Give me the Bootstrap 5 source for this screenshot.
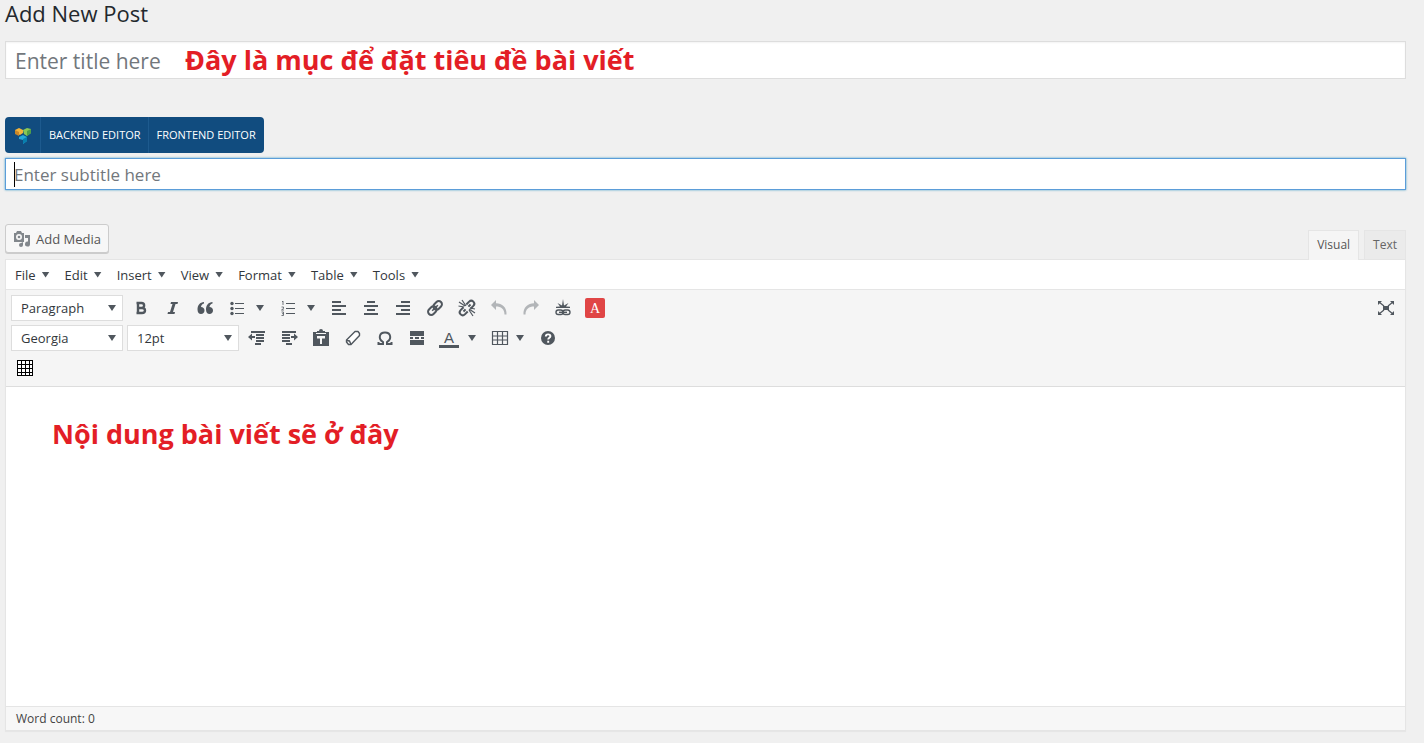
<!DOCTYPE html>
<html lang="vi">
<head>
<meta charset="utf-8">
<meta name="viewport" content="width=device-width, initial-scale=1">
<title>Add New Post</title>
<link href="https://cdn.jsdelivr.net/npm/bootstrap@5.3.0/dist/css/bootstrap.min.css" rel="stylesheet">
<style>
body { background: #f0f0f0; color: #32373c; font: 13px/20px "Open Sans", "Noto Sans", sans-serif; }
.page { padding: 0 18px 12px 5px; }
.page-title { font-size: 22px; line-height: 26px; color: #23282d; margin: 0 0 15px; font-weight: 400; }
.field { border: 1px solid #ddd; border-radius: 0; background: #fff; color: #32373c; line-height: 24px; box-shadow: inset 0 1px 2px rgba(0,0,0,.05); }
.field::placeholder { color: #72777c; opacity: 1; }
.field-title { height: 38px; font-size: 21px; padding: 5px 9px 3px; }
.field-subtitle { height: 32px; font-size: 17px; padding: 4px 8px 3px; border-color: #5b9dd9; box-shadow: 0 0 2px rgba(30,140,190,.8); }
.field-subtitle:focus { border-color: #5b9dd9; box-shadow: 0 0 2px rgba(30,140,190,.8); }
.text-caret { left: 9px; top: 4px; width: 1px; height: 25px; background: #000; }
.note { color: #e31e26; font: 700 27px/32px "Open Sans", "Noto Sans", sans-serif; white-space: nowrap; }
.note-title { left: 180px; top: 3px; pointer-events: none; }
.builder { margin: 38px 0 5px; height: 36px; }
.builder .btn { background: #114c7f; color: #fff; font-size: 11px; line-height: 20px; padding: 0 8px; border: 0; border-left: 1px solid #1d5a8e; border-radius: 4px; }
.builder .btn:first-child { border-left: 0; width: 36px; padding: 0; }
.media-row { margin-top: 34px; }
.btn-media { height: 29px; background: #f7f7f7; border: 1px solid #ccc; border-radius: 3px; color: #555; font-size: 13px; line-height: 20px; padding: 0 7px; box-shadow: 0 1px 0 #ccc; }
.mode-tabs { gap: 5px; padding-top: 6px; }
.mode-tabs .nav-link { height: 29px; padding: 4px 8px; font-size: 12px; color: #666; background: #ebebeb; border: 1px solid #e5e5e5; border-bottom: 0; border-radius: 0; }
.mode-tabs .nav-link.active { background: #f5f5f5; color: #555; height: 30px; margin-bottom: -1px; position: relative; }
.editor { border: 1px solid #e5e5e5; background: #fff; box-shadow: 0 1px 1px rgba(0,0,0,.04); }
.menus { height: 30px; border-bottom: 1px solid #e5e5e5; padding-left: 1px; }
.menus .btn { font-size: 13px; line-height: 20px; padding: 0 7px 0 8px; color: #32373c; border: 0; gap: 6px; border-radius: 0; }
.caret { width: 8px; height: 6px; background: #50575e; clip-path: polygon(0 0, 100% 0, 50% 100%); flex: none; }
.tools { background: #f5f5f5; border-bottom: 1px solid #ddd; padding: 3px 5px; }
.tool-row { gap: 4px; height: 30px; }
.tool-select { width: 112px; height: 26px; font-size: 13px; line-height: 18px; padding: 0 24px 0 9px; border: 1px solid #ddd; border-radius: 0; color: #32373c; background: #fff url("data:image/svg+xml,%3Csvg xmlns='http://www.w3.org/2000/svg' viewBox='0 0 8 6'%3E%3Cpath fill='%2350575e' d='M0 0h8L4 6z'/%3E%3C/svg%3E") no-repeat right 6px center / 8px 6px; }
.tool { width: 28px; height: 26px; padding: 0 4px; border: 0; color: #50575e; gap: 9px; border-radius: 0; }
.tool svg { flex: none; }
.tool-split { width: 47px; }
.tool-table { width: 44px; gap: 6px; }
.faded { opacity: .4; }
.canvas { padding: 31px 46px; }
.status { height: 24px; border-top: 1px solid #e5e5e5; background: #f7f7f7; font-size: 12px; line-height: 24px; padding: 0 10px; color: #444; }
</style>
</head>
<body>
<main class="page min-vh-100 d-flex flex-column">
  <h1 class="page-title">Add New Post</h1>
  <div class="position-relative">
    <input class="field field-title form-control" type="text" placeholder="Enter title here" aria-label="Title">
    <div class="note note-title position-absolute">Đây là mục để đặt tiêu đề bài viết</div>
  </div>
  <div class="builder d-flex">
    <div class="btn-group">
      <button class="btn" type="button" aria-label="Visual composer">
        <svg width="18" height="18" viewBox="0 0 18 18"><path fill="#f3b33b" d="M1 3l4-2 4 2v3L6 8 1 6z"/><path fill="#c78629" d="M1 3l4 2v4L1 7z"/><path fill="#8bc755" d="M9 3l4-2 4 1v4l-4 3-3-2z"/><path fill="#4f9d48" d="M13 4l4-2v4l-4 3z"/><path fill="#27a9d8" d="M5 10l4-2 4 2v4l-4 3v-4l-4-1z"/><path fill="#087fae" d="M9 12l4-2v4l-4 3z"/></svg>
      </button>
      <button class="btn" type="button">BACKEND EDITOR</button>
      <button class="btn" type="button">FRONTEND EDITOR</button>
    </div>
  </div>
  <div class="position-relative">
    <input class="field field-subtitle form-control" type="text" placeholder="Enter subtitle here" aria-label="Subtitle">
    <span class="text-caret position-absolute"></span>
  </div>
  <div class="media-row d-flex justify-content-between">
    <button class="btn btn-media d-flex align-items-center gap-1" type="button">
      <svg width="19" height="18" viewBox="0 0 19 18" fill="#82878c"><path fill-rule="evenodd" d="M1 3h2l1-2h4l1 2h2v9H1zM6 4a3 3 0 1 0 0 6 3 3 0 0 0 0-6z"/><circle cx="6" cy="7" r="1.300"/><path d="M12 5h5v9a2.500 2.500 0 1 1-2-2.400V8h-3z"/><path d="M10 12v3a2 2 0 1 1-2-2z"/></svg>
      Add Media
    </button>
    <nav class="mode-tabs nav" aria-label="Editor mode">
      <a class="nav-link active" href="#">Visual</a>
      <a class="nav-link" href="#">Text</a>
    </nav>
  </div>
  <section class="editor flex-grow-1 d-flex flex-column">
    <div class="menus d-flex align-items-center">
      <button class="btn d-flex align-items-center" type="button">File<span class="caret"></span></button>
      <button class="btn d-flex align-items-center" type="button">Edit<span class="caret"></span></button>
      <button class="btn d-flex align-items-center" type="button">Insert<span class="caret"></span></button>
      <button class="btn d-flex align-items-center" type="button">View<span class="caret"></span></button>
      <button class="btn d-flex align-items-center" type="button">Format<span class="caret"></span></button>
      <button class="btn d-flex align-items-center" type="button">Table<span class="caret"></span></button>
      <button class="btn d-flex align-items-center" type="button">Tools<span class="caret"></span></button>
    </div>
    <div class="tools">
      <div class="tool-row d-flex align-items-center">
        <select class="tool-select form-select" aria-label="Block format"><option>Paragraph</option></select>
        <button class="tool btn d-flex align-items-center" type="button" aria-label="Bold"><svg width="20" height="20" viewBox="0 0 20 20"><path fill="none" stroke="currentColor" stroke-width="2.400" d="M7 5v10h4c4 0 4-5 0-5H7h3.500c3.500 0 3.500-5 0-5zM5.500 5H8M5.500 15H8"/></svg></button>
        <button class="tool btn d-flex align-items-center" type="button" aria-label="Italic"><svg width="20" height="20" viewBox="0 0 20 20"><path fill="currentColor" d="M8 4h7l-.5 2h-2L10 14h2l-.5 2h-7l.5-2h2l2.500-8h-2z"/></svg></button>
        <button class="tool btn d-flex align-items-center" type="button" aria-label="Quote"><svg width="20" height="20" viewBox="0 0 20 20"><path fill="currentColor" d="M9 4v1.500C7 6 6 7.500 6 9c2 0 3.500 1.300 3.500 3.500S8 16 6 16s-3.500-1.500-3.500-4.500C2.500 7 5 4.300 9 4zM17.500 4v1.500c-2 .5-3 2-3 3.500 2 0 3.500 1.300 3.500 3.500S16.500 16 14.500 16 11 14.500 11 11.500C11 7 13.500 4.300 17.500 4z"/></svg></button>
        <button class="tool tool-split btn d-flex align-items-center" type="button" aria-label="Bulleted list"><svg width="20" height="20" viewBox="0 0 20 20"><path stroke="currentColor" stroke-width="1.200" d="M8 5.500h9M8 10.500h9M8 15.500h9"/><g fill="currentColor"><circle cx="5" cy="5.500" r="1.700"/><circle cx="5" cy="10.500" r="1.700"/><circle cx="5" cy="15.500" r="1.700"/></g></svg><span class="caret"></span></button>
        <button class="tool tool-split btn d-flex align-items-center" type="button" aria-label="Numbered list"><svg width="20" height="20" viewBox="0 0 20 20"><path stroke="currentColor" stroke-width="1.200" d="M8 5.500h9M8 10.500h9M8 15.500h9"/><path fill="none" stroke="currentColor" stroke-width=".8" d="M4 4l1-1v4M3.500 9h2v1.500l-2 1.500h2.500M3.500 14h2v3.500h-2M4 15.700h1.500"/></svg><span class="caret"></span></button>
        <button class="tool btn d-flex align-items-center" type="button" aria-label="Align left"><svg width="20" height="20" viewBox="0 0 20 20"><path stroke="currentColor" stroke-width="2" d="M3 4h9M3 8h14M3 12h9M3 16h14"/></svg></button>
        <button class="tool btn d-flex align-items-center" type="button" aria-label="Align center"><svg width="20" height="20" viewBox="0 0 20 20"><path stroke="currentColor" stroke-width="2" d="M6 4h8M3 8h14M6 12h8M3 16h14"/></svg></button>
        <button class="tool btn d-flex align-items-center" type="button" aria-label="Align right"><svg width="20" height="20" viewBox="0 0 20 20"><path stroke="currentColor" stroke-width="2" d="M8 4h9M3 8h14M8 12h9M3 16h14"/></svg></button>
        <button class="tool btn d-flex align-items-center" type="button" aria-label="Insert link"><svg width="20" height="20" viewBox="0 0 20 20"><g fill="none" stroke="currentColor" stroke-width="2" transform="rotate(-45 10 10)"><rect x="1.500" y="6.800" width="9.500" height="6.400" rx="3.200"/><rect x="9" y="6.800" width="9.500" height="6.400" rx="3.200"/><path d="M6 10h8" stroke-width="1.500"/></g></svg></button>
        <button class="tool btn d-flex align-items-center" type="button" aria-label="Remove link"><svg width="20" height="20" viewBox="0 0 20 20"><g fill="none" stroke="currentColor" stroke-width="2" transform="rotate(-45 10 10)"><path d="M8 7H4a3 3 0 0 0 0 6h4M12 7h4a3 3 0 0 1 0 6h-4"/><path d="M5 10h3M12 10h3"/></g><path stroke="currentColor" stroke-width="1.200" d="M2 4l6 4M5 2l4 6M1.500 8L7 9M12 12l4 6M12 11l6 4M13 10l5 1"/></svg></button>
        <button class="tool btn d-flex align-items-center faded" type="button" aria-label="Undo"><svg width="20" height="20" viewBox="0 0 20 20"><path fill="currentColor" d="M7 2v3.200c6 0 11 4 10.500 11.300h-2C15.500 11 12 8.500 7 8.500V12L2 7z"/></svg></button>
        <button class="tool btn d-flex align-items-center faded" type="button" aria-label="Redo"><svg width="20" height="20" viewBox="0 0 20 20"><path fill="currentColor" d="M13 2v3.200C7 5.200 2 9.200 2.500 16.500h2C4.500 11 8 8.500 13 8.500V12l5-5z"/></svg></button>
        <button class="tool btn d-flex align-items-center" type="button" aria-label="Page links"><svg width="20" height="20" viewBox="0 0 20 20"><path fill="currentColor" d="M10 1l1 6.500L15.500 5 13 8.500l4 .3V10H3V8.800l4-.3L4.500 5 9 7.500z"/><g fill="none" stroke="currentColor" stroke-width="1.400"><rect x="3" y="12" width="7" height="4.500" rx="2.200"/><rect x="10" y="12" width="7" height="4.500" rx="2.200"/><path d="M6 14.300h8"/></g></svg></button>
        <button class="tool btn d-flex align-items-center" type="button" aria-label="Font style"><svg width="20" height="20" viewBox="0 0 20 20"><rect width="20" height="20" rx="2" fill="#e04545"/><text x="10" y="15" text-anchor="middle" font-family="Liberation Serif, serif" font-size="14" fill="#fff">A</text></svg></button>
        <button class="tool btn d-flex align-items-center ms-auto" type="button" aria-label="Full screen"><svg width="20" height="20" viewBox="0 0 20 20"><path fill="currentColor" d="M7 8h6v4H7zM2 3h4L2 7zM18 3h-4l4 4zM2 17h4l-4-4zM18 17h-4l4-4z"/><path stroke="currentColor" stroke-width="1.300" d="M3 4l5 4M17 4l-5 4M3 16l5-4M17 16l-5-4"/></svg></button>
      </div>
      <div class="tool-row d-flex align-items-center">
        <select class="tool-select form-select" aria-label="Font family"><option>Georgia</option></select>
        <select class="tool-select form-select" aria-label="Font size"><option>12pt</option></select>
        <button class="tool btn d-flex align-items-center" type="button" aria-label="Decrease indent"><svg width="20" height="20" viewBox="0 0 20 20"><path stroke="currentColor" stroke-width="2" d="M4 4h14M9 7h8M9 10h8M9 13h8M8 16h6"/><path fill="currentColor" d="M1 9l4-3.500V8h3v2H5v2.500z"/></svg></button>
        <button class="tool btn d-flex align-items-center" type="button" aria-label="Increase indent"><svg width="20" height="20" viewBox="0 0 20 20"><path stroke="currentColor" stroke-width="2" d="M3 4h14M3 7h8M3 10h8M3 13h8M7 16h6"/><path fill="currentColor" d="M19 9l-4-3.500V8h-3v2h3v2.500z"/></svg></button>
        <button class="tool btn d-flex align-items-center" type="button" aria-label="Paste as text"><svg width="20" height="20" viewBox="0 0 20 20"><path fill="currentColor" fill-rule="evenodd" d="M2 4h4V3h2a2 2 0 0 1 4 0h2v1h4v14H2zM5 5v1h10V5zM6 8v2.500h3V16h2v-5.500h3V8z"/></svg></button>
        <button class="tool btn d-flex align-items-center" type="button" aria-label="Clear formatting"><svg width="20" height="20" viewBox="0 0 20 20"><path fill="#fff" stroke="currentColor" stroke-width="1.400" stroke-linejoin="round" d="M3.500 12l8.500-8.500h3l1.500 2v2L8 16.500H5.500L3.500 14z"/><path fill="none" stroke="currentColor" stroke-width="1.400" d="M3.500 12.500l3 .5 1.500 3.500"/></svg></button>
        <button class="tool btn d-flex align-items-center" type="button" aria-label="Special character"><svg width="20" height="20" viewBox="0 0 20 20"><path fill="none" stroke="currentColor" stroke-width="2" d="M3.500 14v2H8v-2C3 11 4 4.500 10 4.500S17 11 12 14v2h4.500v-2"/></svg></button>
        <button class="tool btn d-flex align-items-center" type="button" aria-label="Read more"><svg width="20" height="20" viewBox="0 0 20 20"><path fill="currentColor" d="M3 3h14v5H3zM3 12h14v5H3zM3 9h3v2H3zM8 9h4v2H8zM14 9h3v2h-3z"/></svg></button>
        <button class="tool tool-split btn d-flex align-items-center" type="button" aria-label="Text color"><svg width="20" height="20" viewBox="0 0 20 20"><path fill="currentColor" d="M0 17h20v3H0z"/><text x="10" y="15" text-anchor="middle" font-family="Liberation Sans, sans-serif" font-size="15" fill="currentColor">A</text></svg><span class="caret"></span></button>
        <button class="tool tool-table btn d-flex align-items-center" type="button" aria-label="Table"><svg width="20" height="20" viewBox="0 0 20 20"><path fill="none" stroke="currentColor" stroke-width="1.200" d="M2.500 3.500h15v13h-15zM2.500 8h15M2.500 12h15M7.500 3.500v13M12.500 3.500v13"/></svg><span class="caret"></span></button>
        <button class="tool btn d-flex align-items-center" type="button" aria-label="Help"><svg width="20" height="20" viewBox="0 0 20 20"><circle cx="10" cy="10" r="7" fill="currentColor"/><path fill="none" stroke="#fff" stroke-width="1.900" d="M7.800 8.500c0-3 4.600-2.700 4.600-.3 0 1.500-2.200 1.600-2.200 3.300M10.200 12.800v2"/></svg></button>
      </div>
      <div class="tool-row d-flex align-items-center">
        <button class="tool btn d-flex align-items-center" type="button" aria-label="Grid"><svg width="20" height="20" viewBox="0 0 20 20"><path fill="#000" d="M2 2h16v16H2z"/><path fill="#fff" d="M3 3h3v3H3zM7 3h3v3H7zM11 3h3v3h-3zM15 3h2v3h-2zM3 7h3v3H3zM7 7h3v3H7zM11 7h3v3h-3zM15 7h2v3h-2zM3 11h3v3H3zM7 11h3v3H7zM11 11h3v3h-3zM15 11h2v3h-2zM3 15h3v2H3zM7 15h3v2H7zM11 15h3v2h-3zM15 15h2v2h-2z"/></svg></button>
      </div>
    </div>
    <div class="canvas flex-grow-1"><div class="note">Nội dung bài viết sẽ ở đây</div></div>
    <div class="status">Word count: 0</div>
  </section>
</main>
<script src="https://cdn.jsdelivr.net/npm/bootstrap@5.3.0/dist/js/bootstrap.bundle.min.js"></script>
</body>
</html>
